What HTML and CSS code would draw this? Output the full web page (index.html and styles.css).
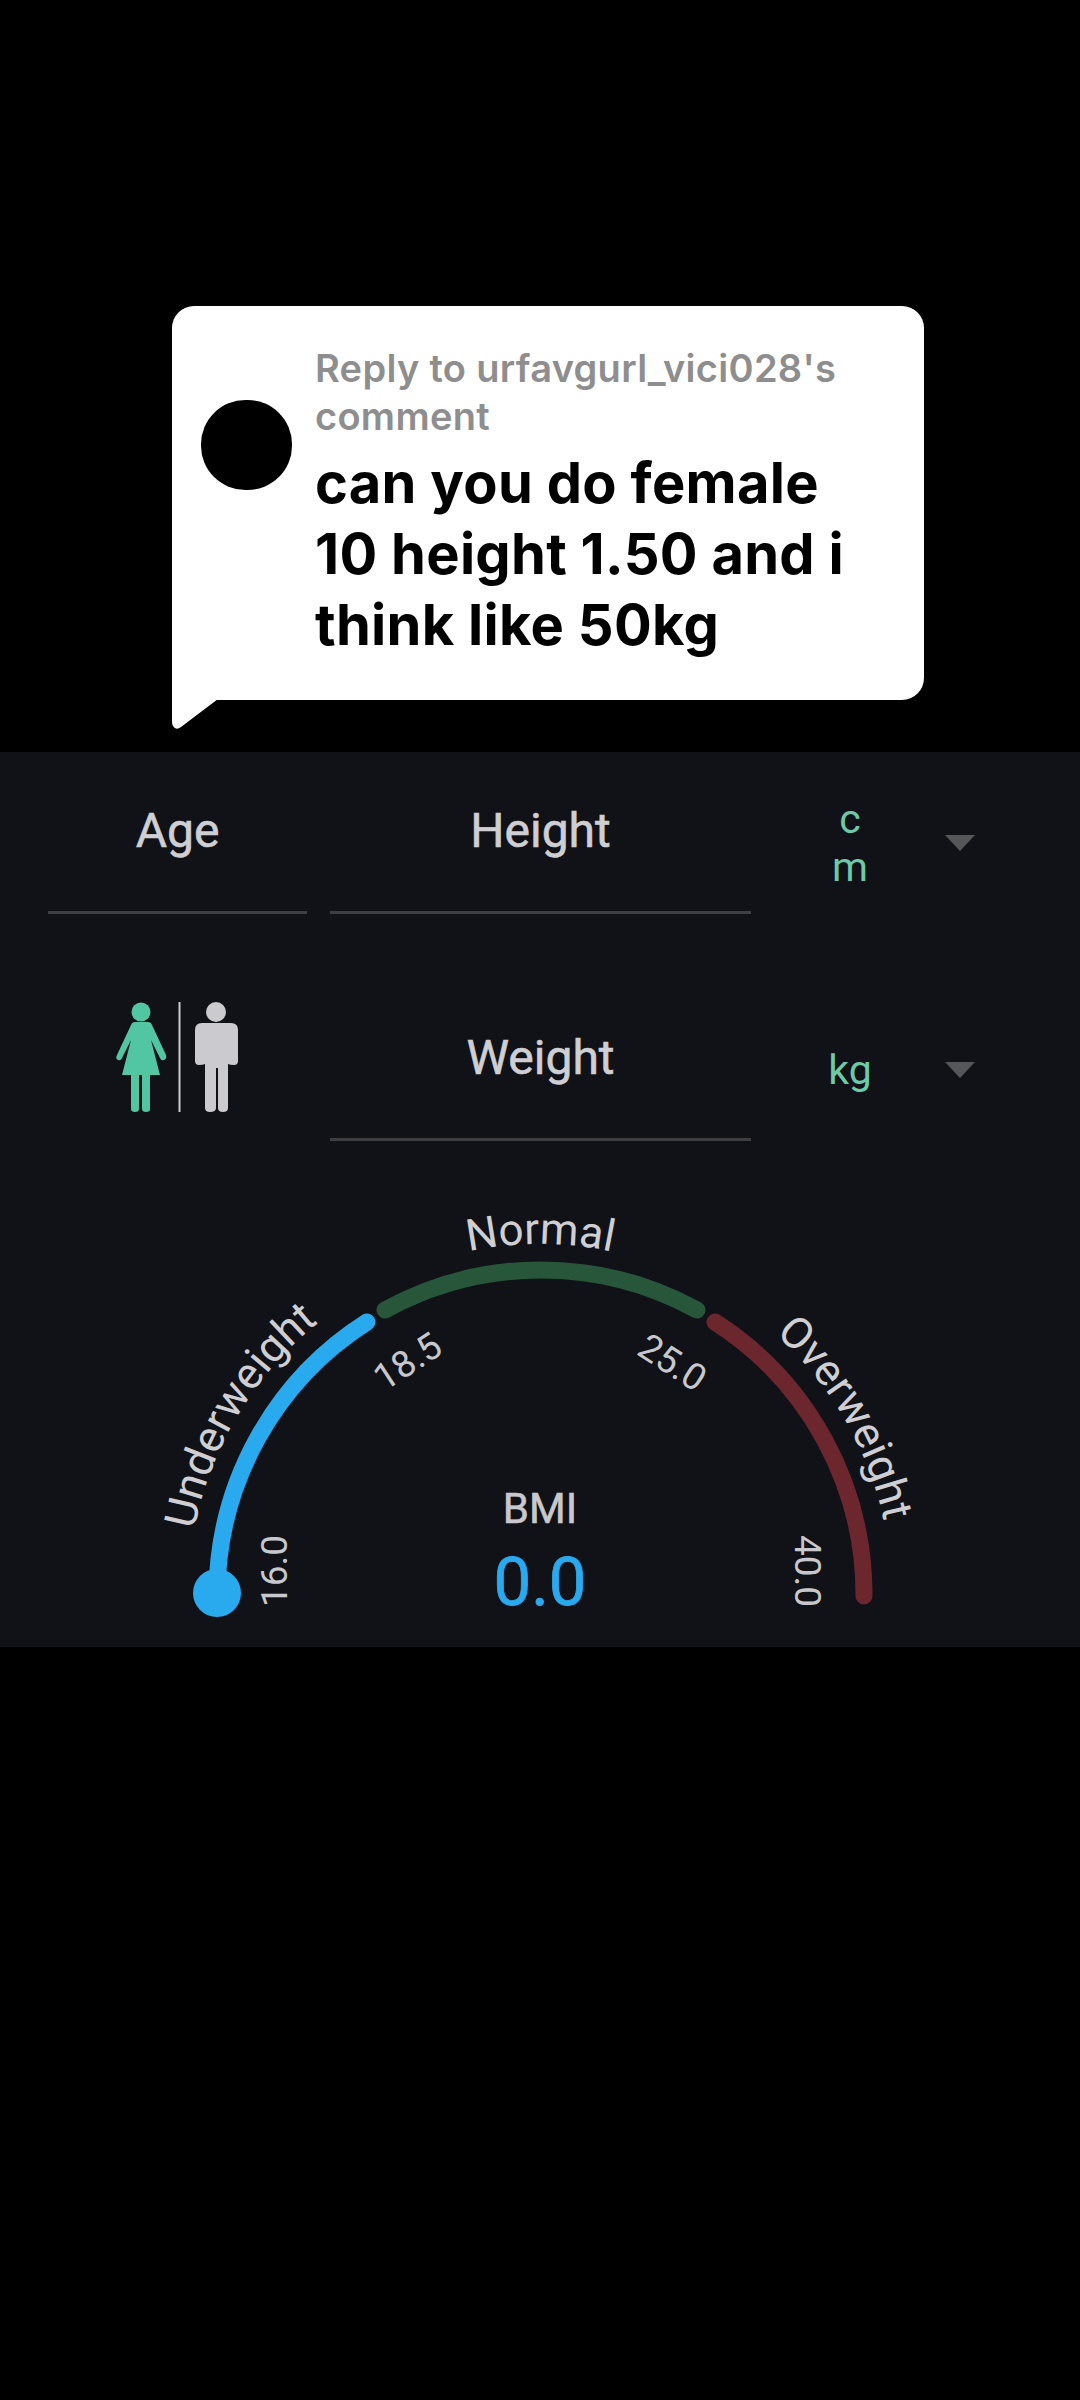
FILE: index.html
```html
<!DOCTYPE html>
<html lang="en">
<head>
    <meta charset="UTF-8">
    <meta name="viewport" content="width=device-width, initial-scale=1.0">
    <title>BMI Calculator</title>
    <link rel="stylesheet" href="styles.css">
</head>
<body>
    <!-- Comment sticker -->
    <div class="bubble">
        <div class="avatar"></div>
        <div class="bubble-text">
            <p class="reply">Reply to urfavgurl_vici028's comment</p>
            <p class="comment">can you do female 10 height 1.50 and i think like 50kg</p>
        </div>
        <svg class="tail" viewBox="0 0 48 32"><path d="M0 0H46L9 28Q4 32 1 27Q0 25 0 22Z"/></svg>
    </div>

    <div class="panel">
        <div class="row">
            <div class="field">Age</div>
            <div class="field">Height</div>
            <div class="unit">
                <span class="unit-value">cm</span>
                <span class="arrow"></span>
            </div>
        </div>

        <div class="row">
            <div class="gender">
                <svg class="gender-icon" viewBox="20 22 140 112">
                    <g class="female">
                        <circle cx="51" cy="32" r="9.5"/>
                        <path d="M45 42H58Q61 42 62 45L76 75Q77 79 74 80Q71 81 70 78L61 60L70 95H60V129Q60 132 56 132Q52 132 52 129V95H49V129Q49 132 45 132Q41 132 41 129V95H32L41 60L32 78Q31 81 28 80Q25 79 27 75L41 45Q42 42 45 42Z"/>
                    </g>
                    <rect class="divider" x="88.5" y="21" width="2" height="111"/>
                    <g class="male">
                        <circle cx="126" cy="32" r="10"/>
                        <path d="M112 43H141Q148 43 148 50V81Q148 85 144 85Q140 85 138 84V128Q138 132 133 132Q128 132 128 128V88H126V128Q126 132 120 132Q115 132 115 128V84Q113 85 109 85Q105 85 105 81V50Q105 43 112 43Z"/>
                    </g>
                </svg>
            </div>
            <div class="field">Weight</div>
            <div class="unit">
                <span class="unit-value">kg</span>
                <span class="arrow"></span>
            </div>
        </div>

        <svg class="gauge" viewBox="0 1141 1080 505">
            <defs>
                <path id="labelArc" d="M188 1596A352 352 0 0 1 892 1596"/>
            </defs>
            <path class="arc arc-normal" d="M385 1310A324 324 0 0 1 697 1310"/>
            <path class="arc arc-over" d="M715 1322A324 324 0 0 1 864 1596"/>
            <path class="arc arc-under" d="M217 1593A324 324 0 0 1 367 1322"/>
            <circle class="knob" cx="217" cy="1593" r="24"/>

            <text class="zone"><textPath href="#labelArc" startOffset="190" text-anchor="middle">Underweight</textPath></text>
            <text class="zone"><textPath href="#labelArc" startOffset="553" text-anchor="middle">Normal</textPath></text>
            <text class="zone"><textPath href="#labelArc" startOffset="920" text-anchor="middle">Overweight</textPath></text>

            <text class="tick" transform="translate(275 1571) rotate(-90)" y="12">16.0</text>
            <text class="tick" transform="translate(408 1362) rotate(-33)" y="12">18.5</text>
            <text class="tick" transform="translate(672 1363) rotate(33)" y="12">25.0</text>
            <text class="tick" transform="translate(807 1571) rotate(90)" y="12">40.0</text>

            <text class="bmi-label" x="540" y="1523">BMI</text>
            <text class="bmi-value" x="540" y="1605">0.0</text>
        </svg>
    </div>
</body>
</html>
```

FILE: styles.css
```css
/* Page */
body {
    margin: 0;
    width: 1080px;
    height: 2400px;
    overflow: hidden;
    background-color: #000;
    font-family: Roboto, "Liberation Sans", sans-serif;
    padding-top: 306px;
    box-sizing: border-box;
}

/* Comment sticker */
.bubble {
    position: relative;
    display: flex;
    gap: 23px;
    box-sizing: border-box;
    width: 752px;
    height: 394px;
    margin-left: 172px;
    padding: 38px 29px 0;
    background-color: #fff;
    border-radius: 22px 22px 22px 0;
    font-family: Inter, Roboto, sans-serif;
}

.avatar {
    flex: none;
    width: 91px;
    height: 90px;
    margin-top: 56px;
    background-color: #000;
    border-radius: 49%;
}

.bubble-text {
    width: 552px;
}

.bubble-text p {
    margin: 0;
}

.reply {
    color: #8e8e8e;
    font-size: 38px;
    font-weight: 600;
    letter-spacing: 0.3px;
    line-height: 48px;
}

.comment {
    margin-top: 8px !important;
    color: #000;
    font-size: 56px;
    font-weight: 700;
    letter-spacing: 0.3px;
    line-height: 71px;
}

.tail {
    position: absolute;
    left: 0;
    top: 393px;
    width: 48px;
    height: 32px;
    fill: #fff;
}

/* Calculator panel */
.panel {
    box-sizing: border-box;
    height: 895px;
    margin-top: 52px;
    padding-top: 23px;
    background-color: #101217;
}

.row {
    display: grid;
    grid-template-columns: 259px 421px 1fr;
    column-gap: 23px;
    height: 139px;
    margin-bottom: 88px;
    padding-left: 48px;
}

.row:nth-child(2) {
    margin-bottom: 0;
}

.field {
    box-sizing: border-box;
    height: 139px;
    padding-top: 30px;
    border-bottom: 3px solid #3f3f43;
    color: #cfcfd3;
    font-size: 48px;
    line-height: 52px;
    text-align: center;
    -webkit-text-stroke: 0.6px #cfcfd3;
}

.gender-icon {
    display: block;
    width: 140px;
    height: 112px;
    margin-left: 62px;
}

.female {
    fill: #52c6a3;
}

.male,
.divider {
    fill: #cbcbcf;
}

.unit {
    display: flex;
    align-items: center;
    padding-left: 52px;
}

.unit-value {
    width: 48px;
    margin-top: -3px;
    color: #6dcaa9;
    font-size: 41px;
    line-height: 48px;
    text-align: center;
    word-break: break-all;
}

.arrow {
    width: 0;
    height: 0;
    margin-top: -3px;
    margin-left: 71px;
    border-top: 16px solid #55565a;
    border-left: 15px solid transparent;
    border-right: 15px solid transparent;
}

/* Gauge */
.gauge {
    display: block;
    width: 1080px;
    height: 505px;
}

.arc {
    fill: none;
    stroke-width: 17;
    stroke-linecap: round;
}

.arc-under {
    stroke: #29a9ee;
}

.arc-normal {
    stroke: #27563b;
}

.arc-over {
    stroke: #6b262e;
}

.knob {
    fill: #29a9ee;
}

.zone {
    fill: #cfcfd3;
    font-size: 44px;
}

.tick {
    fill: #c8c8cc;
    font-size: 37px;
    text-anchor: middle;
}

.bmi-label {
    fill: #c9c9cd;
    stroke: #c9c9cd;
    stroke-width: 0.6;
    font-size: 42px;
    text-anchor: middle;
}

.bmi-value {
    fill: #29a9ee;
    stroke: #29a9ee;
    stroke-width: 0.8;
    font-size: 67px;
    text-anchor: middle;
}
```
